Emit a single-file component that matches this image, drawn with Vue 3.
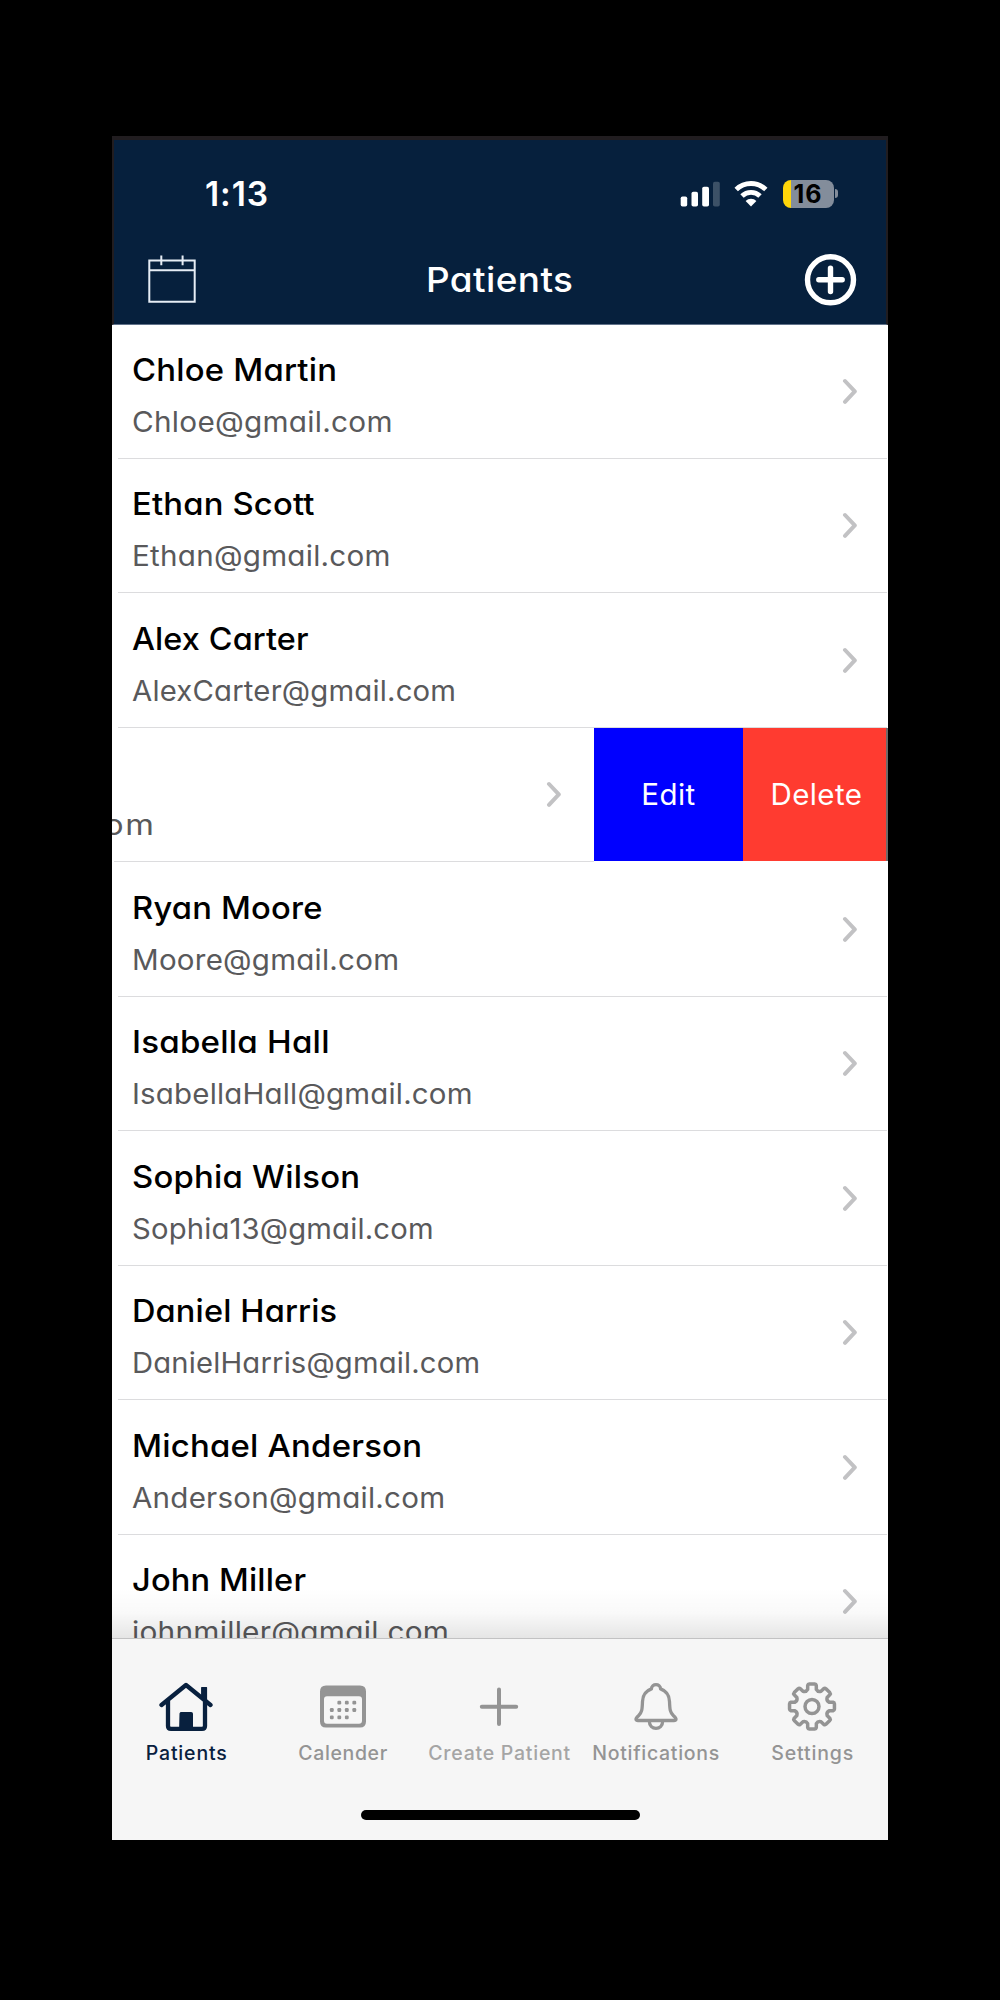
<script setup>
const patients = [
  { name: 'Chloe Martin', nw: 205, email: 'Chloe@gmail.com', ew: 260.5 },
  { name: 'Ethan Scott', nw: 182.5, email: 'Ethan@gmail.com', ew: 258.5 },
  { name: 'Alex Carter', nw: 176.5, email: 'AlexCarter@gmail.com', ew: 324 },
  { swiped: true, name: '', email: 'om', ew: 50 },
  { name: 'Ryan Moore', nw: 190.5, email: 'Moore@gmail.com', ew: 267 },
  { name: 'Isabella Hall', nw: 197.5, email: 'IsabellaHall@gmail.com', ew: 340.5 },
  { name: 'Sophia Wilson', nw: 228, email: 'Sophia13@gmail.com', ew: 301.5 },
  { name: 'Daniel Harris', nw: 205, email: 'DanielHarris@gmail.com', ew: 348 },
  { name: 'Michael Anderson', nw: 290, email: 'Anderson@gmail.com', ew: 313 },
  { name: 'John Miller', nw: 174, email: 'johnmiller@gmail.com', ew: 317 }
]

const tabs = [
  { id: 'home', label: 'Patients', w: 81 },
  { id: 'calendar', label: 'Calender', w: 89 },
  { id: 'plus', label: 'Create Patient', w: 142 },
  { id: 'bell', label: 'Notifications', w: 127 },
  { id: 'gear', label: 'Settings', w: 82 }
]

const dots = [[1, 0], [2, 0], [3, 0], [0, 1], [1, 1], [2, 1], [3, 1], [0, 2], [1, 2], [2, 2]]

// Fits a label to the given width. By default only the tracking changes;
// with the "wide" modifier most of the difference goes into wider letters.
const vFit = {
  mounted(el, { value, modifiers }) {
    if (!value || !el.textContent) return
    const natural = el.getBoundingClientRect().width
    const gaps = el.textContent.length - 1
    const scale = modifiers.wide ? 1 + 0.8 * (value / natural - 1) : 1
    const space = (value / scale - natural) / gaps
    el.style.letterSpacing = `${space.toFixed(3)}px`
    el.style.marginRight = `${(-space).toFixed(3)}px`
    if (modifiers.wide) el.style.transform = `scaleX(${scale.toFixed(4)})`
  }
}

// Eight-toothed cog outline around the centre of a 54px box.
function cog() {
  const p = (r, a) => `${(27 + r * Math.sin(a)).toFixed(2)} ${(27 - r * Math.cos(a)).toFixed(2)}`
  let d = ''
  for (let i = 0; i < 8; i++) {
    const a = (i * Math.PI) / 4
    d += `${i ? 'L' : 'M'}${p(17.6, a - 0.25)}L${p(21.6, a - 0.2)}Q${p(22.7, a - 0.18)} ${p(22.6, a - 0.12)}`
    d += `L${p(22.6, a + 0.12)}Q${p(22.7, a + 0.18)} ${p(21.6, a + 0.2)}L${p(17.6, a + 0.25)}`
    d += `Q${p(15.4, a + Math.PI / 8)} ${p(17.6, a + Math.PI / 4 - 0.25)}`
  }
  return d + 'Z'
}
</script>

<template>
  <div class="stage">
    <main class="phone">
      <header class="header">
        <div class="status">
          <span v-fit="63" class="time">1:13</span>
          <div class="indicators">
            <svg class="signal" width="40" height="26" viewBox="0 0 40 26">
              <rect x="0.7" y="15.5" width="6.5" height="10" rx="1.8" />
              <rect x="11.5" y="10.8" width="6.5" height="14.7" rx="1.8" />
              <rect x="22.2" y="5.8" width="6.8" height="19.7" rx="1.8" />
              <rect x="33" y="0.8" width="6.8" height="24.7" rx="1.8" opacity="0.22" />
            </svg>
            <svg class="wifi" width="34" height="26" viewBox="0 0 34 26">
              <path d="M2.2 8.5A21.2 21.2 0 0 1 31.8 8.5" />
              <path d="M8 15A13 13 0 0 1 26 15" />
              <path class="solid" d="M17 25.4L11.6 19.9A7.6 7.6 0 0 1 22.4 19.9Z" />
            </svg>
            <div class="battery"><span v-fit="28">16</span></div>
            <i class="nub"></i>
          </div>
        </div>
        <div class="title-bar">
          <svg width="50" height="50" viewBox="0 0 50 50" fill="none" stroke="#e6edf5" stroke-width="2">
            <path d="M2.3 5.6H47.7V46.8H2.3ZM2.3 15.3H47.7M14.3 0.5V10.3M35.6 0.5V10.3" />
          </svg>
          <h1><span v-fit.wide="147">Patients</span></h1>
          <svg width="54" height="54" viewBox="0 0 54 54" fill="none" stroke="#fff" stroke-width="5.4" stroke-linecap="round">
            <circle cx="27.5" cy="26.8" r="23" />
            <path d="M15.8 26.8H39.2M27.5 15.1V38.5" />
          </svg>
        </div>
      </header>

      <section class="list">
        <article v-for="(p, i) in patients" :key="i" class="row" :class="{ swiped: p.swiped }">
          <div class="content">
            <div class="text">
              <div class="name"><span v-fit.wide="p.nw">{{ p.name }}</span></div>
              <div class="email"><span v-fit.wide="p.ew">{{ p.email }}</span></div>
            </div>
            <svg class="chevron" width="16" height="26" viewBox="0 0 16 26">
              <path d="M3 3L12.8 13.4L3 23.8" />
            </svg>
          </div>
          <div v-if="p.swiped" class="actions">
            <button class="edit"><span v-fit="54">Edit</span></button>
            <button class="delete"><span v-fit="91.5">Delete</span></button>
          </div>
        </article>
      </section>

      <footer class="footer">
        <nav class="tabs">
          <div v-for="t in tabs" :key="t.id" class="tab" :class="t.id">
            <svg width="54" height="54" viewBox="0 0 54 54">
              <g v-if="t.id === 'home'" fill="none" stroke="currentColor" stroke-width="4.3" stroke-linecap="round" stroke-linejoin="round">
                <path d="M2.5 25L27 5L51.5 25M9 21V46Q9 48.8 12 48.8H43Q46 48.8 46 46V21" />
                <path d="M42.7 7.5H47.5V21.5L42.7 17Z" fill="currentColor" stroke-width="1.2" />
                <path d="M21 33Q21 32.5 22 32.5H32.5Q33.5 32.5 33.5 33.5V49H21Z" fill="currentColor" stroke-width="1" />
              </g>
              <g v-else-if="t.id === 'calendar'" fill="currentColor">
                <path fill-rule="evenodd" d="M10 5.5H44Q50 5.5 50 11.5V41.5Q50 47.5 44 47.5H10Q4 47.5 4 41.5V11.5Q4 5.5 10 5.5ZM11 16.2Q8 16.2 8 19.2V40.5Q8 43.7 11 43.7H43Q46 43.7 46 40.5V19.2Q46 16.2 43 16.2Z" />
                <rect v-for="([x, y], k) in dots" :key="k" :x="13.9 + x * 7.5" :y="20.7 + y * 7.4" width="3.8" height="3.8" rx="1.2" />
              </g>
              <path v-else-if="t.id === 'plus'" d="M9.8 26.7H44.2M27 9.5V43.9" fill="none" stroke="currentColor" stroke-width="4" stroke-linecap="round" />
              <g v-else-if="t.id === 'bell'" fill="none" stroke="currentColor" stroke-width="3.3" stroke-linejoin="round">
                <path d="M22.4 8.9C22.6 3.3 31.4 3.3 31.6 8.9C37.5 11 40.3 15.3 40.5 21.5C40.8 29.5 41 32.5 44.5 35.7C46.5 37.5 47.3 38.5 47 39.5Q46.8 40.5 45 40.5H9Q7.2 40.5 7 39.5C6.7 38.5 7.5 37.5 9.5 35.7C13 32.5 13.2 29.5 13.5 21.5C13.7 15.3 16.5 11 22.4 8.9Z" />
                <path d="M20.3 41C20.3 50.7 33.7 50.7 33.7 41" />
              </g>
              <g v-else fill="none" stroke="currentColor" stroke-width="3.5" stroke-linejoin="round" transform="translate(0 -0.5)">
                <path :d="cog()" />
                <circle cx="27" cy="27" r="7" />
              </g>
            </svg>
            <span v-fit="t.w" class="label">{{ t.label }}</span>
          </div>
        </nav>
        <div class="home-bar"></div>
      </footer>
    </main>
  </div>
</template>

<style>
body {
  background: #000;
}
</style>

<style scoped>
* {
  box-sizing: border-box;
}
.stage {
  width: 1000px;
  height: 2000px;
  padding: 136px 112px 160px;
  background: #000;
  font-family: Inter, "Liberation Sans", sans-serif;
}
.phone {
  display: flex;
  flex-direction: column;
  height: 1704px;
  overflow: hidden;
  background: #fff;
}
span {
  display: inline-block;
  white-space: nowrap;
  transform-origin: left center;
}
.header {
  flex: none;
  height: 188.5px;
  background: #06203d;
  border: 2px solid #211d20;
  border-top-width: 4px;
  border-bottom: 1px solid #61728a;
  color: #fff;
}
.status {
  display: flex;
  justify-content: space-between;
  align-items: center;
  height: 108px;
  padding: 0 48.5px 0 91px;
}
.time {
  font-size: 33.5px;
  font-weight: 600;
}
.indicators {
  display: flex;
  align-items: center;
  margin-top: -1px;
}
.signal {
  fill: #fff;
}
.wifi {
  margin: 0 15px 0 14.5px;
  fill: none;
  stroke: #fff;
  stroke-width: 4.9;
}
.wifi .solid {
  fill: #fff;
  stroke: none;
}
.battery {
  width: 50.5px;
  height: 28px;
  padding-left: 10.5px;
  border-radius: 8px;
  background: linear-gradient(90deg, #ffd60a 8.3px, #838d9b 8.3px);
  color: #000;
  font-size: 25px;
  font-weight: 700;
  line-height: 28px;
}
.nub {
  width: 3px;
  height: 9px;
  margin-left: 1px;
  border-radius: 0 4px 4px 0;
  background: #838d9b;
}
.title-bar {
  display: flex;
  justify-content: space-between;
  align-items: center;
  height: 64px;
  padding: 0 29.5px 0 33px;
}
h1 {
  width: 147px;
  margin: 0 0 2px;
  font-size: 34px;
  font-weight: 500;
  font-feature-settings: "cv11";
}
.list {
  flex: 1;
  min-height: 0;
  overflow: hidden;
  position: relative;
}
.list::after {
  content: "";
  position: absolute;
  inset: auto 0 0;
  height: 50px;
  background: linear-gradient(rgba(0, 0, 0, 0), rgba(0, 0, 0, 0.025) 50%, rgba(0, 0, 0, 0.1));
}
.row {
  display: flex;
  height: 134.5px;
}
.row:first-child {
  height: 134px;
}
.content {
  flex: 1;
  min-width: 0;
  display: flex;
  align-items: center;
  justify-content: space-between;
  margin: 0 1px 0 6px;
  padding: 0 29px 0 14px;
  border-bottom: 1px solid #dcdcde;
}
.text {
  padding-top: 10px;
}
.name {
  height: 51px;
  color: #000;
  font-size: 31.5px;
  font-weight: 500;
  line-height: 50px;
  font-feature-settings: "cv11";
}
.email {
  height: 51px;
  color: #59595b;
  font-size: 28px;
  line-height: 52px;
  font-feature-settings: "cv11";
}
.chevron {
  fill: none;
  stroke: #c2c2c4;
  stroke-width: 4;
  stroke-linecap: round;
  stroke-linejoin: round;
}
.swiped {
  overflow: hidden;
}
.swiped .content {
  margin: 0 0 0 2px;
  padding: 0 32.5px 0 0;
}
.swiped .email {
  margin-left: -10px;
}
.actions {
  display: flex;
  width: 294px;
  height: 133.5px;
  border-right: 2px solid #716a69;
}
button {
  border: 0;
  padding: 0;
  color: #fff;
  font: 400 29.5px Inter, "Liberation Sans", sans-serif;
}
.edit {
  width: 148.5px;
  background: #0000ff;
}
.delete {
  flex: 1;
  padding-left: 4px;
  background: #ff3b30;
}
.footer {
  flex: none;
  height: 202px;
  background: #f6f6f6;
  border-top: 1px solid #c2c2c3;
}
.tabs {
  display: flex;
  height: 170.5px;
  margin: 0 -2.5px 0 -4px;
  padding-top: 40.5px;
}
.tab {
  flex: 1 1 0;
  min-width: 0;
  display: flex;
  flex-direction: column;
  align-items: center;
  color: #949494;
}
.tab.home {
  color: #08203e;
}
.tab.plus .label {
  color: #a5a5a5;
}
.label {
  margin-top: 7px;
  font-size: 19.5px;
  font-weight: 500;
  line-height: 24px;
}
.home-bar {
  width: 279px;
  height: 10.5px;
  margin: 0 auto;
  border-radius: 6px;
  background: #000;
}
</style>
